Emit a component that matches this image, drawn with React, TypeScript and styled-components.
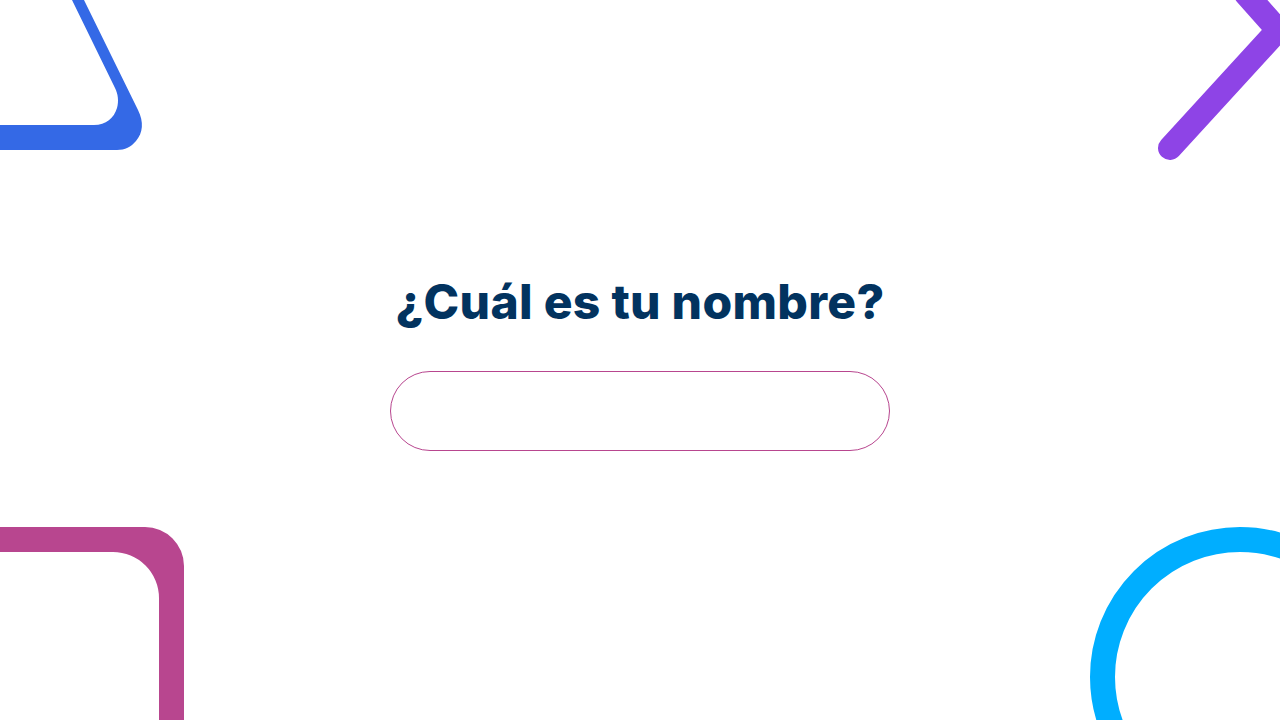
import React from "react";
import styled, { createGlobalStyle } from "styled-components";

const GlobalStyle = createGlobalStyle`
  html, body {
    margin: 0;
    padding: 0;
    background: #ffffff;
    overflow: hidden;
  }
  * { box-sizing: border-box; }
`;

const Page = styled.main`
  position: relative;
  width: 1280px;
  height: 720px;
  overflow: hidden;
  background: #ffffff;
  display: flex;
  flex-direction: column;
  align-items: center;
  justify-content: center;
  gap: 37px;
  padding-top: 1px;
  font-family: Inter, "Noto Sans", sans-serif;
`;

const Decor = styled.svg`
  position: absolute;
  inset: 0;
  width: 1280px;
  height: 720px;
  pointer-events: none;
`;

const Title = styled.h1`
  position: relative;
  margin: 0;
  font-family: Inter, "Noto Sans", sans-serif;
  font-weight: 800;
  font-size: 48px;
  line-height: 64px;
  height: 64px;
  color: #02335f;
  letter-spacing: 0.3px;
  text-align: center;
`;

const NameInput = styled.input`
  position: relative;
  display: block;
  width: 500px;
  height: 80px;
  border: 1px solid #b8468f;
  border-radius: 40px;
  background: #ffffff;
  padding: 0 32px;
  font-family: Inter, "Noto Sans", sans-serif;
  font-size: 22px;
  color: #02335f;
  outline: none;
`;

export default function App() {
  return (
    <>
      <GlobalStyle />
      <Page>
        <Decor viewBox="0 0 1280 720" aria-hidden="true">
          <path
            d="M84,0 L138,110 C144,122 143,133 136,141 C131,147 125,150 117,150 L0,150 L0,125 L94,125 C106,125 114,118 117,108 C119,101 118,94 115,88 L72,0 Z"
            fill="#3469e6"
          />
          <polyline
            points="1170,148 1278,30 1246,-6"
            fill="none"
            stroke="#8e44e6"
            strokeWidth="24"
            strokeLinecap="round"
            strokeLinejoin="miter"
          />
          <path
            d="M0,527 L145,527 A39,39 0 0 1 184,566 L184,720 L159,720 L159,598 A46,46 0 0 0 113,552 L0,552 Z"
            fill="#b8468f"
          />
          <circle cx="1240" cy="677" r="137.5" fill="none" stroke="#00aeff" strokeWidth="25" />
        </Decor>
        <Title>¿Cuál es tu nombre?</Title>
        <NameInput type="text" aria-label="Nombre" />
      </Page>
    </>
  );
}
